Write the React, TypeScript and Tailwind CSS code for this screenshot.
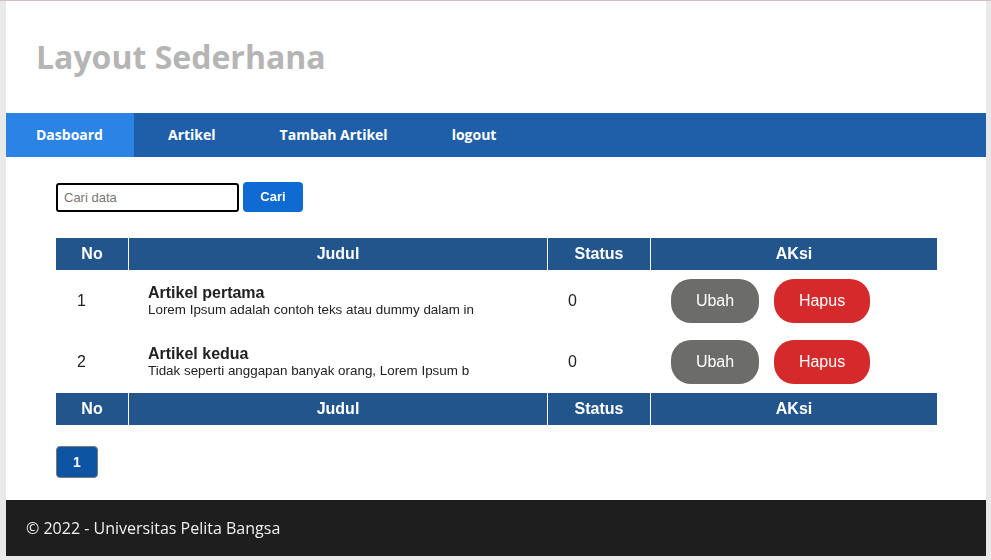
const articles = [
  {
    no: 1,
    judul: 'Artikel pertama',
    isi: 'Lorem Ipsum adalah contoh teks atau dummy dalam in',
    status: 0,
  },
  {
    no: 2,
    judul: 'Artikel kedua',
    isi: 'Tidak seperti anggapan banyak orang, Lorem Ipsum b',
    status: 0,
  },
]

const menu = ['Dasboard', 'Artikel', 'Tambah Artikel', 'logout']

const cols = 'grid grid-cols-[72px_418px_102px_286px] gap-x-px'
const headCell = 'flex items-center justify-center bg-[#22558c]'

function TableHead() {
  return (
    <div className={`${cols} h-8 text-white font-bold text-base`}>
      <div className={headCell}>No</div>
      <div className={headCell}>Judul</div>
      <div className={headCell}>Status</div>
      <div className={headCell}>AKsi</div>
    </div>
  )
}

export default function App() {
  return (
    <div className="min-h-[560px] bg-[#e9e9e9] border-t border-[#d6bcc4] font-['Liberation_Sans',Arial,sans-serif]">
      <div className="w-[980px] ml-[6px] bg-white">
        <header className="h-[112px] flex items-center pl-[30px]">
          <h1 className="font-['Open_Sans',sans-serif] font-bold text-[32px] leading-[44px] text-[#b5b5b5]">
            Layout Sederhana
          </h1>
        </header>

        <nav className="h-11 bg-[#1f5fa9] flex gap-1 font-['Open_Sans',sans-serif] font-bold text-sm text-white">
          {menu.map((item, i) => (
            <a
              key={item}
              href="#"
              className={`flex items-center px-[30px] ${i === 0 ? 'bg-[#2b83e6] pr-[31px]' : ''}`}
            >
              {item}
            </a>
          ))}
        </nav>

        <main className="px-[50px] pt-[25px] pb-[22px]">
          <form className="flex items-center gap-1">
            <input
              type="text"
              autoFocus
              placeholder="Cari data"
              className="w-[183px] h-[29px] rounded-[3px] border-2 border-black px-[6px] text-[13px] placeholder:text-[#777] outline-none"
            />
            <button
              type="submit"
              className="w-[60px] h-[30px] rounded-[4px] bg-[#0f6bd1] text-white text-[13px] font-bold"
            >
              Cari
            </button>
          </form>

          <div className="mt-[26px] w-[881px]">
            <TableHead />
            {articles.map((a) => (
              <div key={a.no} className={`${cols} h-[61px] text-[#222]`}>
                <div className="flex items-center pl-[21px] text-base">{a.no}</div>
                <div className="flex flex-col justify-center pl-[19px]">
                  <span className="font-bold text-base leading-[18px]">{a.judul}</span>
                  <span className="text-[13.4px] leading-[16px]">{a.isi}</span>
                </div>
                <div className="flex items-center pl-5 text-base">{a.status}</div>
                <div className="flex items-center gap-[15px] pl-5">
                  <button className="w-[88px] h-11 rounded-[20px] bg-[#6c6d6b] text-white text-base">
                    Ubah
                  </button>
                  <button className="w-24 h-11 rounded-[20px] bg-[#d42a2b] text-white text-base">
                    Hapus
                  </button>
                </div>
              </div>
            ))}
            <div className="h-px" />
            <TableHead />
          </div>

          <div className="mt-[21px]">
            <button className="w-[42px] h-8 rounded-[4px] border border-[#7a7a7a] bg-[#0d55a3] text-white text-sm font-bold">
              1
            </button>
          </div>
        </main>

        <footer className="h-14 bg-[#1e1e1e] flex items-center pl-5 font-['Open_Sans',sans-serif] text-base text-[#f0f0f0]">
          © 2022 - Universitas Pelita Bangsa
        </footer>
      </div>
    </div>
  )
}
